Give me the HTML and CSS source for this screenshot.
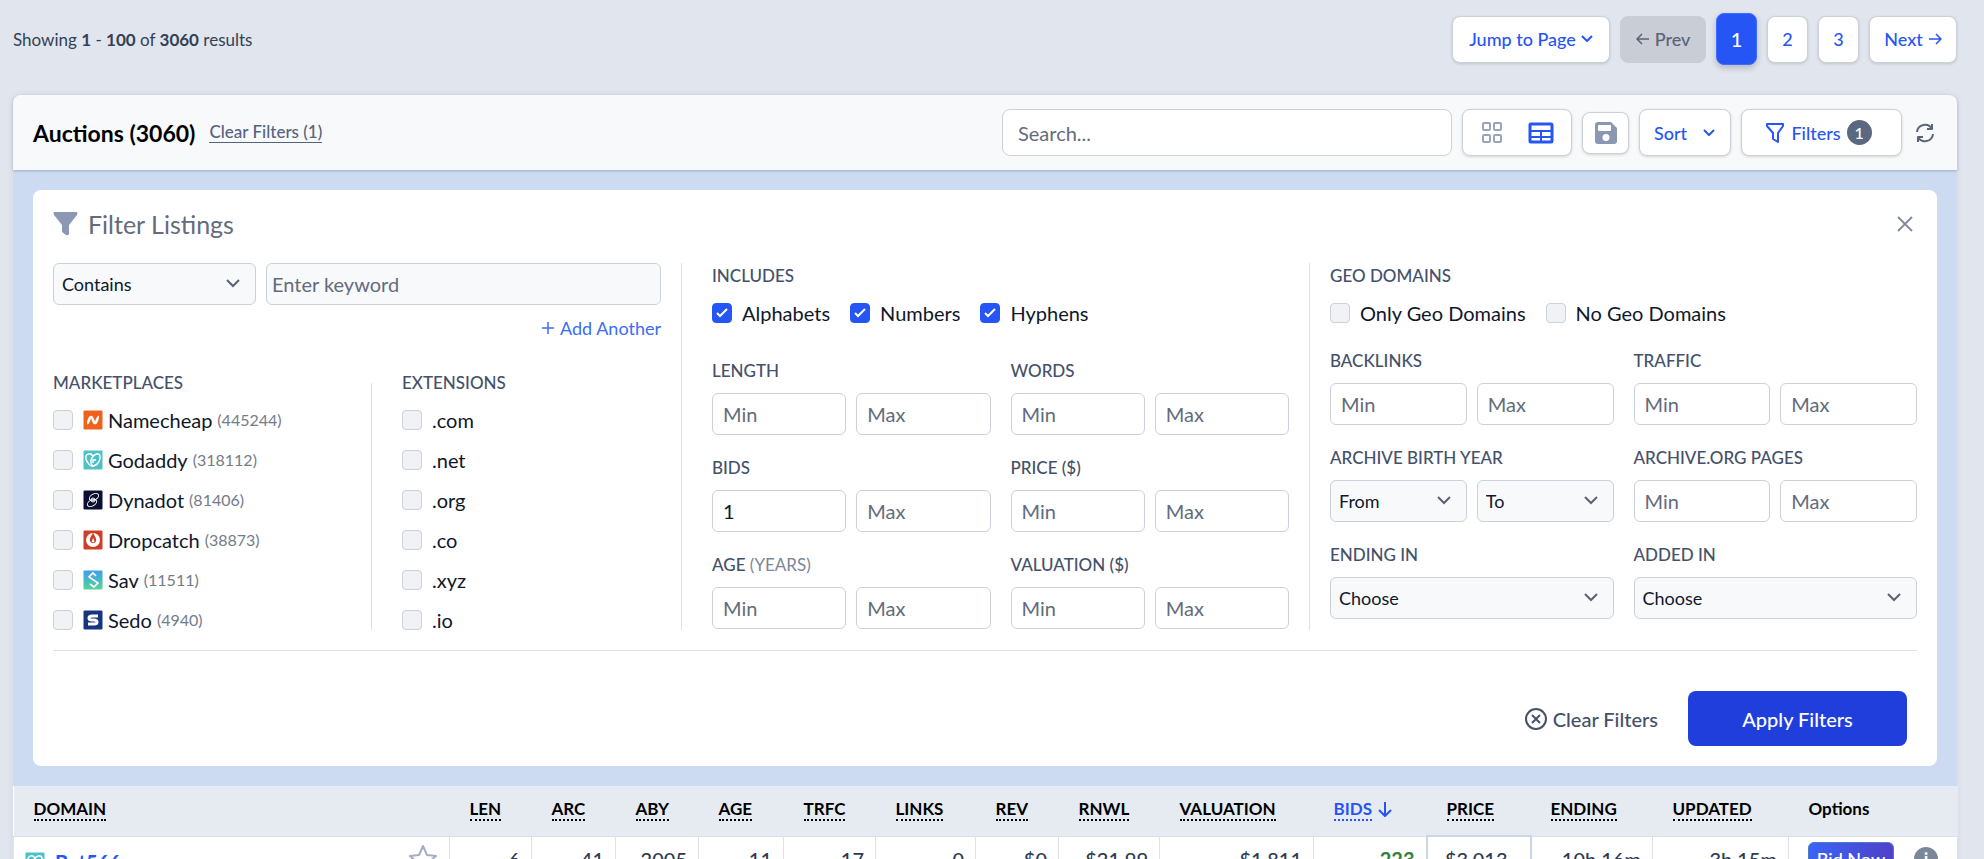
FILE: index.html
```html
<!DOCTYPE html>
<html lang="en">
<head>
    <meta charset="UTF-8">
    <meta name="viewport" content="width=device-width, initial-scale=1.0">
    <title>Auctions</title>
    <link rel="stylesheet" href="styles.css">
</head>
<body>
    <div class="pager-bar">
        <p class="pager-info">Showing <b>1</b> - <b>100</b> of <b>3060</b> results</p>
        <nav class="pager">
            <button class="btn btn-jump">Jump to Page
                <svg class="ico" width="12" height="12" viewBox="0 0 12 12"><path d="M1 3l5 5 5-5"/></svg>
            </button>
            <button class="btn btn-prev" disabled>
                <svg class="ico thin" width="14" height="14" viewBox="0 0 14 14"><path d="M13 7H1M6 2L1 7l5 5"/></svg>
                Prev
            </button>
            <a class="btn page current" href="#">1</a>
            <a class="btn page" href="#">2</a>
            <a class="btn page" href="#">3</a>
            <a class="btn btn-next" href="#">Next
                <svg class="ico thin" width="14" height="14" viewBox="0 0 14 14"><path d="M1 7h12M8 2l5 5-5 5"/></svg>
            </a>
        </nav>
    </div>

    <main class="card">
        <header class="card-head">
            <h1>Auctions (3060)</h1>
            <a class="clear-link" href="#">Clear Filters (1)</a>
            <div class="tools">
                <input class="search" type="text" placeholder="Search..." aria-label="Search">
                <div class="views">
                    <button aria-label="Grid view">
                        <svg class="ico grey" width="24" height="24" viewBox="0 0 24 24"><rect x="3" y="2" width="7" height="7" rx="1"/><rect x="14" y="2" width="7" height="7" rx="1"/><rect x="3" y="14" width="7" height="7" rx="1"/><rect x="14" y="14" width="7" height="7" rx="1"/></svg>
                    </button>
                    <button aria-label="Table view">
                        <svg class="ico" width="26" height="24" viewBox="0 0 26 24"><rect x="2" y="3" width="22" height="18" rx="1" stroke-width="3"/><path d="M2 10h22M2 16h22M13 10v11"/></svg>
                    </button>
                </div>
                <button class="btn save" aria-label="Save search">
                    <svg width="24" height="24" viewBox="0 0 24 24"><path fill="#8b98b3" fill-rule="evenodd" d="M4 1h13l6 6v13a3 3 0 0 1-3 3H4a3 3 0 0 1-3-3V4a3 3 0 0 1 3-3zM5 4a1 1 0 0 0-1 1v4a1 1 0 0 0 1 1h11a1 1 0 0 0 1-1V5a1 1 0 0 0-1-1zM12 13a3.5 3.5 0 1 0 0 7 3.5 3.5 0 0 0 0-7z"/></svg>
                </button>
                <button class="btn sort">Sort
                    <svg class="ico" width="14" height="14" viewBox="0 0 14 14"><path d="M2 4l5 5 5-5"/></svg>
                </button>
                <button class="btn filters">
                    <svg class="ico" width="20" height="22" viewBox="0 0 20 22"><path d="M2 2h16v2l-5 7v9l-5-3v-6L2 4z"/></svg>
                    Filters <span class="count">1</span>
                </button>
                <button class="plain" aria-label="Refresh">
                    <svg class="ico slate" width="20" height="20" viewBox="0 0 20 20"><path d="M2 9a8 8 0 0 1 15-3M17 1v5h-5M18 11a8 8 0 0 1-15 3M3 19v-5h5"/></svg>
                </button>
            </div>
        </header>

        <section class="filter-area">
            <form class="panel">
                <div class="panel-title">
                    <svg width="25" height="24" viewBox="0 0 25 24"><path fill="#8b98b3" d="M1 0h23q1 1 0 3l-8 10v9q-1 2-3 1l-4-3v-7L1 3Q0 1 1 0z"/></svg>
                    <h2>Filter Listings</h2>
                    <button type="button" class="plain" aria-label="Close">
                        <svg class="ico close" width="16" height="16" viewBox="0 0 16 16"><path d="M1 1l14 14M15 1L1 15"/></svg>
                    </button>
                </div>

                <div class="columns">
                    <div class="col col-left">
                        <div class="keyword">
                            <select aria-label="Match type"><option>Contains</option></select>
                            <input type="text" placeholder="Enter keyword" aria-label="Keyword">
                        </div>
                        <a class="add" href="#">
                            <svg class="ico thin" width="14" height="14" viewBox="0 0 14 14"><path d="M7 1v12M1 7h12"/></svg>
                            Add Another
                        </a>
                        <div class="lists">
                            <fieldset class="list markets">
                                <legend>MARKETPLACES</legend>
                                <label><input type="checkbox">
                                    <svg class="logo" viewBox="0 0 20 20"><rect width="20" height="20" fill="#ee621d"/><path d="M4 13c2 0 2-6 4-6s2 6 4 6 2-6 4-6" stroke-width="2.6"/></svg>
                                    Namecheap <small>(445244)</small></label>
                                <label><input type="checkbox">
                                    <svg class="logo" viewBox="0 0 20 20"><rect width="20" height="20" fill="#50c0c5"/><path stroke-width="1.4" d="M10 6C7 2 2 4 3 9c1 4 5 8 7 7 4 0 8-6 7-10-1-4-6-2-8 2-2 3-1 6 1 8M10 6c2-2 5-3 7-1M13 10h-3v3"/></svg>
                                    Godaddy <small>(318112)</small></label>
                                <label><input type="checkbox">
                                    <svg class="logo" viewBox="0 0 20 20"><rect width="20" height="20" fill="#0b1033"/><ellipse cx="11" cy="7" rx="5" ry="3" transform="rotate(-30 11 7)"/><ellipse cx="9" cy="13" rx="5" ry="3" transform="rotate(-30 9 13)"/><circle cx="10" cy="10" r="2"/></svg>
                                    Dynadot <small>(81406)</small></label>
                                <label><input type="checkbox">
                                    <svg class="logo" viewBox="0 0 20 20"><rect width="20" height="20" fill="#d03d25"/><circle cx="10" cy="10" r="7" fill="#fff" stroke="none"/><path fill="#d03d25" stroke="none" d="M10 2c1 4 4 6 3 9s-5 3-6 0 2-5 3-9z"/><path fill="#fff" stroke="none" d="M10 8c1 2 2 3 1 4s-3 0-2-1z"/></svg>
                                    Dropcatch <small>(38873)</small></label>
                                <label><input type="checkbox">
                                    <svg class="logo" viewBox="0 0 20 20"><defs><linearGradient id="sav" x2="0" y2="1"><stop stop-color="#3f9cf0"/><stop offset="1" stop-color="#55d597"/></linearGradient></defs><rect width="20" height="20" fill="url(#sav)"/><path d="M13 6l-3-3-4 4 9 6-4 4-4-3" stroke-width="1.6"/></svg>
                                    Sav <small>(11511)</small></label>
                                <label><input type="checkbox">
                                    <svg class="logo" viewBox="0 0 20 20"><rect width="20" height="20" fill="#17357f"/><path d="M15 6H9C5 6 5 10 9 10h2c4 0 4 4 0 4H5" stroke-width="3"/></svg>
                                    Sedo <small>(4940)</small></label>
                            </fieldset>
                            <fieldset class="list">
                                <legend>EXTENSIONS</legend>
                                <label><input type="checkbox">.com</label>
                                <label><input type="checkbox">.net</label>
                                <label><input type="checkbox">.org</label>
                                <label><input type="checkbox">.co</label>
                                <label><input type="checkbox">.xyz</label>
                                <label><input type="checkbox">.io</label>
                            </fieldset>
                        </div>
                    </div>

                    <div class="col col-mid">
                        <fieldset class="checks">
                            <legend>INCLUDES</legend>
                            <label><input type="checkbox" checked>Alphabets</label>
                            <label><input type="checkbox" checked>Numbers</label>
                            <label><input type="checkbox" checked>Hyphens</label>
                        </fieldset>
                        <div class="ranges">
                            <fieldset><legend>LENGTH</legend><input placeholder="Min" aria-label="Length min"><input placeholder="Max" aria-label="Length max"></fieldset>
                            <fieldset><legend>WORDS</legend><input placeholder="Min" aria-label="Words min"><input placeholder="Max" aria-label="Words max"></fieldset>
                            <fieldset><legend>BIDS</legend><input placeholder="Min" value="1" aria-label="Bids min"><input placeholder="Max" aria-label="Bids max"></fieldset>
                            <fieldset><legend>PRICE ($)</legend><input placeholder="Min" aria-label="Price min"><input placeholder="Max" aria-label="Price max"></fieldset>
                            <fieldset><legend>AGE <span>(YEARS)</span></legend><input placeholder="Min" aria-label="Age min"><input placeholder="Max" aria-label="Age max"></fieldset>
                            <fieldset><legend>VALUATION ($)</legend><input placeholder="Min" aria-label="Valuation min"><input placeholder="Max" aria-label="Valuation max"></fieldset>
                        </div>
                    </div>

                    <div class="col col-right">
                        <fieldset class="checks">
                            <legend>GEO DOMAINS</legend>
                            <label><input type="checkbox">Only Geo Domains</label>
                            <label><input type="checkbox">No Geo Domains</label>
                        </fieldset>
                        <div class="ranges">
                            <fieldset><legend>BACKLINKS</legend><input placeholder="Min" aria-label="Backlinks min"><input placeholder="Max" aria-label="Backlinks max"></fieldset>
                            <fieldset><legend>TRAFFIC</legend><input placeholder="Min" aria-label="Traffic min"><input placeholder="Max" aria-label="Traffic max"></fieldset>
                            <fieldset><legend>ARCHIVE BIRTH YEAR</legend><select aria-label="From year"><option>From</option></select><select aria-label="To year"><option>To</option></select></fieldset>
                            <fieldset><legend>ARCHIVE.ORG PAGES</legend><input placeholder="Min" aria-label="Pages min"><input placeholder="Max" aria-label="Pages max"></fieldset>
                            <fieldset><legend>ENDING IN</legend><select aria-label="Ending in"><option>Choose</option></select></fieldset>
                            <fieldset><legend>ADDED IN</legend><select aria-label="Added in"><option>Choose</option></select></fieldset>
                        </div>
                    </div>
                </div>

                <div class="actions">
                    <button type="reset" class="plain clear">
                        <svg class="ico" width="22" height="22" viewBox="0 0 22 22"><circle cx="11" cy="11" r="10"/><path d="M7 7l8 8M15 7l-8 8"/></svg>
                        Clear Filters
                    </button>
                    <button type="submit" class="apply">Apply Filters</button>
                </div>
            </form>
        </section>

        <table class="results">
            <colgroup>
                <col class="c-domain"><col class="c-len"><col class="c-arc"><col class="c-aby"><col class="c-age"><col class="c-trfc"><col class="c-links"><col class="c-rev"><col class="c-rnwl"><col class="c-val"><col class="c-bids"><col class="c-price"><col class="c-ending"><col class="c-updated"><col class="c-options">
            </colgroup>
            <thead>
                <tr>
                    <th><abbr>DOMAIN</abbr></th>
                    <th><abbr>LEN</abbr></th>
                    <th><abbr>ARC</abbr></th>
                    <th><abbr>ABY</abbr></th>
                    <th><abbr>AGE</abbr></th>
                    <th><abbr>TRFC</abbr></th>
                    <th><abbr>LINKS</abbr></th>
                    <th><abbr>REV</abbr></th>
                    <th><abbr>RNWL</abbr></th>
                    <th><abbr>VALUATION</abbr></th>
                    <th class="sorted"><abbr>BIDS</abbr>
                        <svg class="ico" width="14" height="16" viewBox="0 0 14 16"><path d="M7 1v14M1 9l6 6 6-6"/></svg>
                    </th>
                    <th><abbr>PRICE</abbr></th>
                    <th><abbr>ENDING</abbr></th>
                    <th><abbr>UPDATED</abbr></th>
                    <th>Options</th>
                </tr>
            </thead>
            <tbody>
                <tr>
                    <td>
                        <div class="domain">
                            <svg class="logo" viewBox="0 0 20 20"><rect width="20" height="20" fill="#50c0c5"/><path stroke-width="1.4" d="M10 6C7 2 2 4 3 9c1 4 5 8 7 7 4 0 8-6 7-10-1-4-6-2-8 2-2 3-1 6 1 8M10 6c2-2 5-3 7-1M13 10h-3v3"/></svg>
                            <a href="#">Bet566.com</a>
                            <svg class="ico star" width="30" height="30" viewBox="0 0 30 30"><path d="M15 2l4 9 9 1-7 6 2 9-8-5-8 5 2-9-7-6 9-1z"/></svg>
                        </div>
                    </td>
                    <td>6</td>
                    <td>41</td>
                    <td>2005</td>
                    <td>11</td>
                    <td>17</td>
                    <td>0</td>
                    <td>$0</td>
                    <td>$21.99</td>
                    <td>$1,811</td>
                    <td class="bids">223</td>
                    <td class="price">$3,013</td>
                    <td>10h 16m</td>
                    <td>3h 15m</td>
                    <td>
                        <div class="options">
                            <button class="bid">Bid Now</button>
                            <span class="info">i</span>
                        </div>
                    </td>
                </tr>
            </tbody>
        </table>
    </main>
</body>
</html>
```
FILE: styles.css
```css
* {
    box-sizing: border-box;
}
body {
    margin: 0;
    padding: 13px 27px 0 13px;
    background: #e1e5ed;
    color: #0f172a;
    font: 20px/24px Lato, "Open Sans", sans-serif;
    height: 100vh;
    overflow: hidden;
}
h1, h2, p, fieldset, legend {
    margin: 0;
    padding: 0;
    border: 0;
}
button, input, select {
    font: inherit;
    color: inherit;
    margin: 0;
}
.ico {
    fill: none;
    stroke: currentColor;
    stroke-width: 2;
    stroke-linejoin: round;
    flex: none;
}
.thin {
    stroke-width: 1.5;
}
.grey {
    color: #98a4bb;
}
.slate {
    color: #5b6579;
}

/* top pager */
.pager-bar {
    display: flex;
    align-items: center;
    justify-content: space-between;
    height: 52px;
    margin-bottom: 30px;
}
.pager-info {
    font-size: 17px;
    color: #334155;
    padding-top: 2px;
}
.pager {
    display: flex;
    align-items: center;
    gap: 10px;
}
.btn {
    display: flex;
    align-items: center;
    justify-content: center;
    gap: 5px;
    height: 47px;
    padding: 0 15px;
    background: #fff;
    border: 1px solid #cbd0d9;
    border-radius: 8px;
    box-shadow: 0 1px 3px rgba(0, 0, 0, .15);
    color: #2655f5;
    font-size: 18px;
    font-weight: 500;
    text-decoration: none;
    white-space: nowrap;
}
.btn-jump {
    width: 158px;
}
.btn-prev {
    width: 86px;
    background: #c9cdd5;
    border-color: #c9cdd5;
    box-shadow: none;
    color: #5b6275;
}
.page {
    width: 41px;
    padding: 0;
}
.page.current {
    height: 52px;
    background: #2655f5;
    border-color: #3d6cff;
    color: #fff;
    font-size: 20px;
    box-shadow: 0 3px 6px rgba(0, 0, 0, .2);
}
.btn-next {
    width: 88px;
}

/* card header */
.card {
    border-radius: 8px 8px 0 0;
    box-shadow: 0 0 8px rgba(0, 0, 0, .06);
}
.card-head {
    position: relative;
    display: flex;
    align-items: center;
    height: 75px;
    padding: 0 20px;
    background: #f8f9fb;
    border-radius: 8px 8px 0 0;
    box-shadow: 0 1px 3px rgba(30, 60, 120, .3);
}
h1 {
    font-size: 23px;
    font-weight: 700;
    color: #000;
}
.clear-link {
    margin-left: 14px;
    font-size: 17px;
    font-weight: 500;
    line-height: 20px;
    color: #56637e;
    text-decoration: none;
    border-bottom: 1px solid #56637e;
}
.tools {
    display: flex;
    align-items: center;
    gap: 10px;
    margin-left: auto;
}
.search {
    width: 450px;
    height: 47px;
    padding: 0 15px;
    border: 1px solid #cbd0d9;
    border-radius: 8px;
}
input::placeholder {
    color: #646b7c;
    opacity: 1;
}
.views {
    display: flex;
    align-items: center;
    justify-content: space-around;
    width: 110px;
    height: 47px;
    padding: 0 5px;
    background: #fff;
    border: 1px solid #cbd0d9;
    border-radius: 8px;
    box-shadow: 0 1px 3px rgba(0, 0, 0, .15);
    color: #2655f5;
}
.views button, .plain {
    display: flex;
    align-items: center;
    padding: 0;
    background: none;
    border: 0;
}
.save {
    width: 47px;
    height: 42px;
    padding: 0;
}
.sort {
    width: 92px;
    gap: 15px;
}
.filters {
    width: 161px;
    gap: 6px;
    padding-right: 21px;
}
.count {
    width: 25px;
    height: 25px;
    border-radius: 50%;
    background: #5b6881;
    color: #fff;
    font-size: 16px;
    line-height: 25px;
    text-align: center;
}
.tools .plain {
    margin: 0 2px 0 3px;
}

/* filter panel */
.filter-area {
    padding: 20px;
    background: #cddbf2;
}
.panel {
    padding: 20px;
    background: #fff;
    border-radius: 8px;
}
.panel-title {
    display: flex;
    align-items: center;
    gap: 10px;
    height: 28px;
    margin-bottom: 25px;
    color: #646b7c;
}
h2 {
    font-size: 25px;
    font-weight: 400;
}
.panel-title .plain {
    margin: 0 4px 0 auto;
    color: #858c9c;
}
.columns {
    display: grid;
    grid-template-columns: 629fr 628fr 607fr;
}
.col-left {
    padding-right: 20px;
    border-right: 1px solid #dde0e7;
}
.col-mid {
    padding: 0 20px 0 30px;
    border-right: 1px solid #dde0e7;
}
.col-right {
    padding-left: 20px;
}
.keyword {
    display: grid;
    grid-template-columns: 203px 1fr;
    gap: 10px;
}
.panel input:not([type="checkbox"]), select {
    flex: 1;
    width: 100%;
    min-width: 0;
    height: 42px;
    padding: 0 10px;
    background: #fff;
    border: 1px solid #cbd0d9;
    border-radius: 6px;
}
.panel .keyword input:not([type="checkbox"]) {
    padding: 0 5px;
    background: #f8f9fb;
}
.panel select {
    appearance: none;
    padding: 0 8px;
    background: #f8f9fb url("data:image/svg+xml,%3Csvg xmlns='http://www.w3.org/2000/svg' width='14' height='10'%3E%3Cpath d='M1 1l6 6 6-6' fill='none' stroke='%235b6275' stroke-width='2'/%3E%3C/svg%3E") no-repeat right 15px center;
    font-size: 18px;
}
.add {
    display: flex;
    align-items: center;
    justify-content: flex-end;
    gap: 5px;
    margin: 11px 0 30px;
    font-size: 18px;
    color: #3b6df6;
    text-decoration: none;
}
.lists {
    display: grid;
    grid-template-columns: 319px 1fr;
}
.list + .list {
    padding-left: 30px;
}
.markets {
    border-right: 1px solid #dde0e7;
}
legend {
    height: 26px;
    font-size: 17px;
    font-weight: 500;
    line-height: 26px;
    color: #44516a;
}
legend span {
    color: #7d8596;
    font-weight: 400;
}
.list label {
    display: flex;
    align-items: center;
    height: 20px;
    margin-bottom: 20px;
    white-space: nowrap;
}
.list label:last-child {
    margin-bottom: 0;
}
.list legend {
    margin-bottom: 14px;
}
input[type="checkbox"] {
    appearance: none;
    flex: none;
    width: 20px;
    height: 20px;
    margin-right: 10px;
    background: #f0f2f6;
    border: 1px solid #cdd1d9;
    border-radius: 4px;
}
input[type="checkbox"]:checked {
    border-color: #2655f5;
    background: #2655f5 url("data:image/svg+xml,%3Csvg xmlns='http://www.w3.org/2000/svg' width='12' height='10'%3E%3Cpath d='M1 5l3 3 7-7' fill='none' stroke='white' stroke-width='2'/%3E%3C/svg%3E") no-repeat center;
}
.logo {
    flex: none;
    width: 20px;
    height: 20px;
    margin-right: 5px;
    border-radius: 3px;
    fill: none;
    stroke: #fff;
}
small {
    font-size: 16px;
    color: #747b89;
}
.list label small {
    padding-left: 5px;
}
.checks {
    display: flex;
    flex-wrap: wrap;
    gap: 0 20px;
}
.checks legend {
    margin-bottom: 14px;
}
.checks label {
    display: flex;
    align-items: center;
    height: 20px;
}
.ranges {
    display: grid;
    grid-template-columns: 1fr 1fr;
    gap: 20px;
    margin-top: 25px;
}
.ranges fieldset {
    display: flex;
    gap: 10px;
    min-width: 0;
}
.ranges legend {
    margin-bottom: 9px;
}
.col-mid .ranges {
    margin-top: 35px;
}
.actions {
    display: flex;
    align-items: center;
    justify-content: flex-end;
    gap: 30px;
    margin-top: 20px;
    padding: 40px 10px 0;
    border-top: 1px solid #dde0e7;
}
.clear {
    gap: 6px;
    color: #44516a;
    font-weight: 500;
}
.apply {
    width: 219px;
    height: 55px;
    background: #203edc;
    border: 0;
    border-radius: 8px;
    color: #fff;
    font-weight: 500;
}

/* results */
.results {
    width: 100%;
    table-layout: fixed;
    border-collapse: collapse;
    background: #fff;
}
.c-domain { width: 436px; }
.c-len { width: 82px; }
.c-arc { width: 84px; }
.c-aby { width: 83px; }
.c-age { width: 85px; }
.c-trfc { width: 92px; }
.c-links { width: 100px; }
.c-rev { width: 83px; }
.c-rnwl { width: 101px; }
.c-val { width: 154px; }
.c-bids { width: 113px; }
.c-price { width: 104px; }
.c-ending { width: 122px; }
.c-updated { width: 136px; }
.c-options { width: 169px; }
th {
    height: 50px;
    padding: 0 0 4px 20px;
    background: #e6eaf1;
    border-bottom: 1px solid #d9e0ea;
    color: #000;
    font-size: 17px;
    font-weight: 700;
    text-align: left;
    white-space: nowrap;
}
abbr {
    border-bottom: 2px dotted currentColor;
}
th.sorted {
    color: #2655f5;
}
th .ico {
    margin-left: 2px;
    vertical-align: -2px;
}
td {
    height: 46px;
    padding: 0 11px;
    border: 1px solid #dde2ee;
    color: #2f3a50;
    font-weight: 500;
    text-align: right;
    white-space: nowrap;
}
td.bids {
    color: #36803f;
    font-weight: 700;
}
td.price {
    border: 2px solid #ccd5e2;
    padding-right: 22px;
}
.domain {
    display: flex;
    align-items: flex-start;
}
.domain .logo {
    margin-top: 8px;
}
.domain a {
    margin: 6px 0 0 5px;
    color: #2655f5;
    font-weight: 700;
    text-decoration: none;
}
.star {
    margin-left: auto;
    color: #a4adc2;
}
.options {
    display: flex;
    align-items: center;
    gap: 20px;
    padding-left: 8px;
}
.bid {
    width: 86px;
    height: 34px;
    padding: 0;
    background: linear-gradient(90deg, #3b64f6, #5040c9);
    border: 1px solid #4a7cc9;
    border-radius: 6px;
    color: #fff;
    font-size: 18px;
}
.info {
    width: 24px;
    height: 24px;
    border-radius: 50%;
    background: #7b8699;
    color: #fff;
    font-size: 18px;
    font-weight: 700;
    text-align: center;
}
```
